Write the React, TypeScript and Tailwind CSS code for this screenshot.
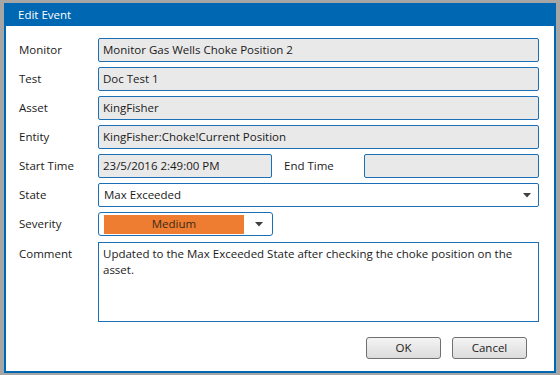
const font = { fontFamily: '"Open Sans", "Noto Sans", sans-serif' };

function Arrow() {
  return (
    <svg width="8" height="5" viewBox="0 0 8 5" className="shrink-0">
      <path d="M0 0 H8 L4 4.5 Z" fill="#404040" />
    </svg>
  );
}

function Field({ label, children }: { label: string; children: React.ReactNode }) {
  return (
    <div className="flex items-center h-[24px] mb-[5px]">
      <div className="w-[79px] shrink-0 text-[#1a1a1a]">{label}</div>
      {children}
    </div>
  );
}

function ReadBox({ value, className = "flex-1" }: { value: string; className?: string }) {
  return (
    <div className={`${className} h-[24px] flex items-center px-[4px] bg-[#e9e9e9] border border-[#1b6fb6] rounded-[2px] text-[#1a1a1a]`}>
      {value}
    </div>
  );
}

export default function App() {
  return (
    <div className="w-[560px] h-[375px] bg-[#a6a6a6] pt-[3px] px-[4px] text-[11.5px]" style={font}>
      <div className="h-[370px] bg-[#0068b2] flex flex-col">
        <div className="h-[23px] shrink-0 flex items-center pl-[14px] text-white">Edit Event</div>
        <div className="flex-1 bg-white mx-[2px] mb-[2px] pt-[12px] pl-[13px] pr-[15px]">
          <Field label="Monitor">
            <ReadBox value="Monitor Gas Wells Choke Position 2" />
          </Field>
          <Field label="Test">
            <ReadBox value="Doc Test 1" />
          </Field>
          <Field label="Asset">
            <ReadBox value="KingFisher" />
          </Field>
          <Field label="Entity">
            <ReadBox value="KingFisher:Choke!Current Position" />
          </Field>
          <Field label="Start Time">
            <ReadBox value="23/5/2016 2:49:00 PM" className="w-[174px]" />
            <div className="w-[92px] pl-[12px] text-[#1a1a1a]">End Time</div>
            <ReadBox value="" />
          </Field>
          <Field label="State">
            <div className="flex-1 h-[24px] flex items-center justify-between pl-[5px] pr-[7px] bg-white border border-[#1b6fb6] rounded-[2px] text-[#1a1a1a]">
              <span>Max Exceeded</span>
              <Arrow />
            </div>
          </Field>
          <div className="flex items-center h-[24px] mb-[6px]">
            <div className="w-[79px] shrink-0 text-[#1a1a1a]">Severity</div>
            <div className="w-[175px] h-[24px] flex items-center pl-[5px] pr-[9px] bg-white border border-[#1b6fb6] rounded-[3px]">
              <div className="w-[140px] h-[19px] bg-[#ee7d31] flex items-center justify-center text-[#3a2a1a]">Medium</div>
              <div className="flex-1 flex justify-end">
                <Arrow />
              </div>
            </div>
          </div>
          <div className="flex">
            <div className="w-[79px] shrink-0 pt-[3px] text-[#1a1a1a]">Comment</div>
            <div className="flex-1 h-[80px] border border-[#1b6fb6] px-[4px] pt-[3px] leading-[16px] text-[#1a1a1a]">
              Updated to the Max Exceeded State after checking the choke position on the asset.
            </div>
          </div>
          <div className="flex justify-end gap-[11px] mt-[15px] pr-[12px]">
            <button className="w-[75px] h-[22px] rounded-[3px] border border-[#707070] bg-gradient-to-b from-[#f4f4f4] to-[#dcdcdc] text-[#1a1a1a]">OK</button>
            <button className="w-[75px] h-[22px] rounded-[3px] border border-[#707070] bg-gradient-to-b from-[#f4f4f4] to-[#dcdcdc] text-[#1a1a1a]">Cancel</button>
          </div>
        </div>
      </div>
    </div>
  );
}
